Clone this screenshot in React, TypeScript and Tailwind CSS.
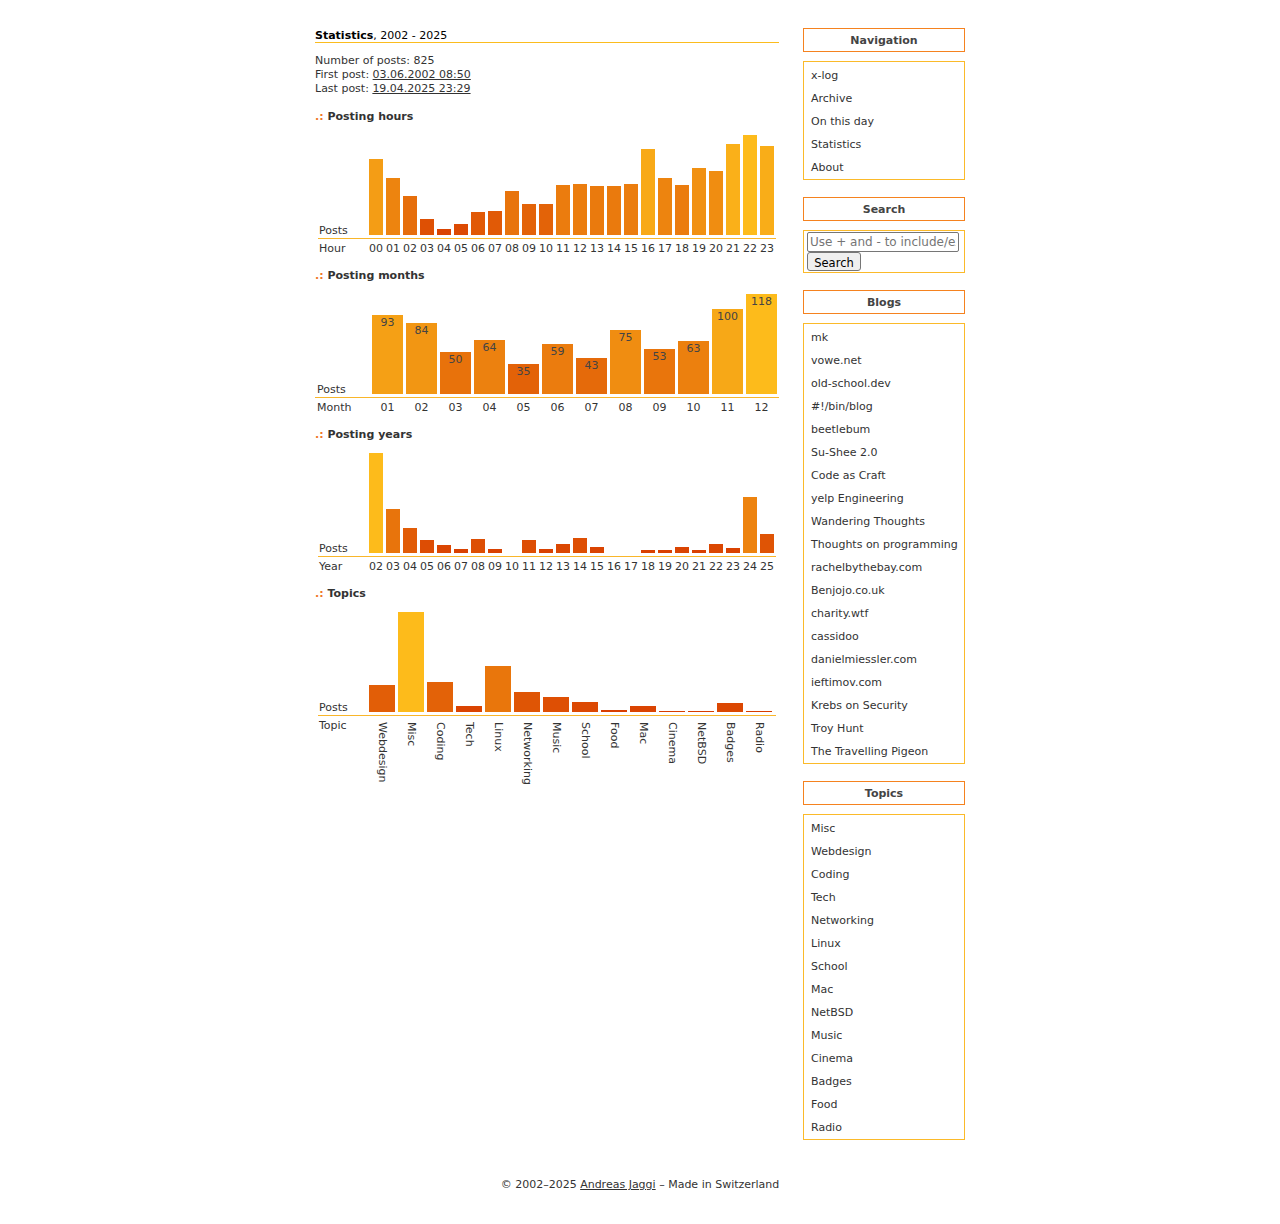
import React from 'react'

type Item = { label: string; value: number }

const LOW = [216, 60, 0]
const HIGH = [253, 187, 27]

// bar colour goes from dark orange (small) to yellow (large)
function barColor(t: number) {
  const c = LOW.map((l, i) => Math.round(l + (HIGH[i] - l) * t))
  return `rgb(${c[0]}, ${c[1]}, ${c[2]})`
}

const hours = [76, 57, 39, 16, 6, 11, 23, 24, 44, 31, 31, 50, 51, 49, 49, 51, 86, 57, 50, 67, 64, 91, 100, 89].map(
  (v, i) => ({ label: String(i).padStart(2, '0'), value: v })
)

const months = [93, 84, 50, 64, 35, 59, 43, 75, 53, 63, 100, 118].map((v, i) => ({
  label: String(i + 1).padStart(2, '0'),
  value: v,
}))

const years = [100, 44, 25, 13, 8, 4, 14, 4, 0, 13, 4, 9, 15, 6, 0, 0, 3, 3, 6, 3, 9, 5, 56, 19].map((v, i) => ({
  label: String(i + 2).padStart(2, '0'),
  value: v,
}))

const topics: Item[] = [
  ['Webdesign', 27],
  ['Misc', 100],
  ['Coding', 30],
  ['Tech', 6],
  ['Linux', 46],
  ['Networking', 20],
  ['Music', 15],
  ['School', 10],
  ['Food', 2],
  ['Mac', 6],
  ['Cinema', 1],
  ['NetBSD', 1],
  ['Badges', 9],
  ['Radio', 1],
].map(([label, value]) => ({ label: label as string, value: value as number }))

interface ChartProps {
  items: Item[]
  max: number
  axis: string
  wrapClass: string
  labelClass: string
  barClass: string
  showValues?: boolean
  vertical?: boolean
}

function Chart({ items, max, axis, wrapClass, labelClass, barClass, showValues, vertical }: ChartProps) {
  return (
    <div className={wrapClass}>
      <div className="flex h-[104px] items-end border-b border-[#f9b62a]">
        <div className={`${labelClass} shrink-0 leading-[14px]`}>Posts</div>
        <div className="flex items-end gap-[3px] pb-[3px]">
          {items.map((it) => {
            const h = Math.round((it.value / max) * 100)
            return (
              <div
                key={it.label}
                className={`${barClass} flex justify-center leading-[14px] text-[#444]`}
                style={{ height: h, backgroundColor: barColor(it.value / max) }}
              >
                {showValues && <span className="pt-px">{it.value}</span>}
              </div>
            )
          })}
        </div>
      </div>
      <div className="mt-[3px] flex leading-[14px]">
        <div className={`${labelClass} shrink-0`}>{axis}</div>
        <div className="flex gap-[3px]">
          {items.map((it) => (
            <div key={it.label} className={`${barClass} flex justify-center whitespace-nowrap`}>
              {vertical ? <span className="pt-[3px] [writing-mode:vertical-rl]">{it.label}</span> : it.label}
            </div>
          ))}
        </div>
      </div>
    </div>
  )
}

function Heading({ children }: { children: React.ReactNode }) {
  return (
    <h2 className="pt-px font-bold leading-[14px] text-[#333]">
      <span className="text-[#f0782a]">.:</span> {children}
    </h2>
  )
}

function SideBox({ title, children }: { title: string; children: React.ReactNode }) {
  return (
    <div className="mb-[17px]">
      <div className="flex h-[24px] items-center justify-center border border-[#f5821f] pt-[2px] font-bold text-[#444]">
        {title}
      </div>
      <div className="mt-[9px] border border-[#fbba2a] py-px">{children}</div>
    </div>
  )
}

function LinkList({ items }: { items: string[] }) {
  return (
    <ul>
      {items.map((x) => (
        <li key={x} className="h-[23px] whitespace-nowrap px-[7px] pt-[2px] leading-[21px] text-[#333]">
          {x}
        </li>
      ))}
    </ul>
  )
}

const blogs = [
  'mk',
  'vowe.net',
  'old-school.dev',
  '#!/bin/blog',
  'beetlebum',
  'Su-Shee 2.0',
  'Code as Craft',
  'yelp Engineering',
  'Wandering Thoughts',
  'Thoughts on programming',
  'rachelbythebay.com',
  'Benjojo.co.uk',
  'charity.wtf',
  'cassidoo',
  'danielmiessler.com',
  'ieftimov.com',
  'Krebs on Security',
  'Troy Hunt',
  'The Travelling Pigeon',
]

const topicLinks = [
  'Misc',
  'Webdesign',
  'Coding',
  'Tech',
  'Networking',
  'Linux',
  'School',
  'Mac',
  'NetBSD',
  'Music',
  'Cinema',
  'Badges',
  'Food',
  'Radio',
]

export default function App() {
  return (
    <div className="min-h-[1224px] bg-white pt-7 font-['DejaVu_Sans',Verdana,sans-serif] text-[11px] text-[#333]">
      <div className="mx-auto flex w-[650px] items-start gap-6">
        <main className="w-[464px] shrink-0">
          <h1 className="border-b border-[#fbbc1e] pt-[2px] leading-[12px] text-black">
            <span className="font-bold">Statistics</span>, 2002 - 2025
          </h1>

          <div className="mt-[11px] leading-[14px]">
            <div>Number of posts: 825</div>
            <div>
              First post: <a className="underline">03.06.2002 08:50</a>
            </div>
            <div>
              Last post: <a className="underline">19.04.2025 23:29</a>
            </div>
          </div>

          <div className="mt-[13px]">
            <Heading>Posting hours</Heading>
          </div>
          <div className="mt-[11px]">
            <Chart
              items={hours}
              max={100}
              axis="Hour"
              wrapClass="ml-[3px] w-[458px]"
              labelClass="w-[51px] pl-px"
              barClass="w-[14px]"
            />
          </div>

          <div className="mt-[12px]">
            <Heading>Posting months</Heading>
          </div>
          <div className="mt-[11px]">
            <Chart
              items={months}
              max={118}
              axis="Month"
              wrapClass="w-[464px]"
              labelClass="w-[57px] pl-[2px]"
              barClass="w-[31px]"
              showValues
            />
          </div>

          <div className="mt-[12px]">
            <Heading>Posting years</Heading>
          </div>
          <div className="mt-[11px]">
            <Chart
              items={years}
              max={100}
              axis="Year"
              wrapClass="ml-[3px] w-[458px]"
              labelClass="w-[51px] pl-px"
              barClass="w-[14px]"
            />
          </div>

          <div className="mt-[12px]">
            <Heading>Topics</Heading>
          </div>
          <div className="mt-[11px]">
            <Chart
              items={topics}
              max={100}
              axis="Topic"
              wrapClass="ml-[3px] w-[458px]"
              labelClass="w-[51px] pl-px"
              barClass="w-[26px]"
              vertical
            />
          </div>
        </main>

        <aside className="w-[162px] shrink-0">
          <SideBox title="Navigation">
            <LinkList items={['x-log', 'Archive', 'On this day', 'Statistics', 'About']} />
          </SideBox>

          <SideBox title="Search">
            <div className="flex flex-col items-start pl-[3px]">
              <input
                className="h-[20px] w-[152px] rounded-[2px] border border-[#767676] px-[2px] font-['DejaVu_Sans',sans-serif] text-[12px] text-black placeholder:text-[#757575]"
                placeholder="Use + and - to include/exclude"
              />
              <button className="h-[19px] w-[54px] rounded-[3px] border border-[#767676] bg-[#efefef] pt-[2px] font-['DejaVu_Sans',sans-serif] text-[11.5px] text-black">
                Search
              </button>
            </div>
          </SideBox>

          <SideBox title="Blogs">
            <LinkList items={blogs} />
          </SideBox>

          <SideBox title="Topics">
            <LinkList items={topicLinks} />
          </SideBox>
        </aside>
      </div>

      <footer className="mt-5 pt-px text-center leading-[14px]">
        © 2002–2025 <a className="underline">Andreas Jaggi</a> – Made in Switzerland
      </footer>
    </div>
  )
}
